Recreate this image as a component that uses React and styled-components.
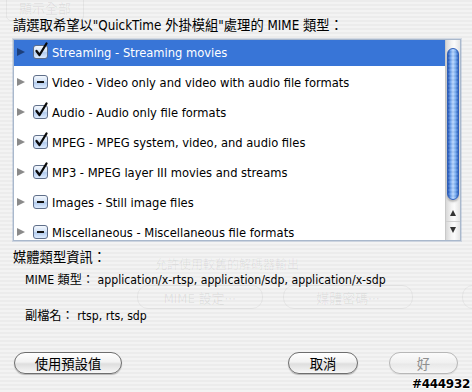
import React from "react";
import styled, { createGlobalStyle, css } from "styled-components";

const FONT = `"DejaVu Sans Condensed", "DejaVu Sans", "Noto Sans CJK TC", sans-serif`;

const Global = createGlobalStyle`
  html, body { margin: 0; padding: 0; }
  body {
    width: 472px; height: 392px; overflow: hidden;
    font-family: ${FONT};
    font-stretch: condensed;
    color: #000;
  }
`;

const Sheet = styled.div`
  position: relative;
  width: 472px;
  height: 392px;
  box-sizing: border-box;
  padding: 17px 11px 0 13px;
  background: repeating-linear-gradient(180deg, #ececec 0 2px, #f3f3f3 2px 4px);
  display: flex;
  flex-direction: column;
  overflow: hidden;
`;

const Ghost = styled.div`
  position: absolute;
  inset: 0;
  pointer-events: none;
`;

const GhostButton = styled.div`
  position: absolute;
  left: ${(p) => p.$x}px;
  top: ${(p) => p.$y}px;
  width: ${(p) => p.$w}px;
  height: ${(p) => p.$h || 22}px;
  border: 1px solid rgba(0, 0, 0, 0.05);
  border-radius: ${(p) => p.$r || 11}px;
  display: flex;
  align-items: center;
  justify-content: center;
  font-size: 13px;
  color: rgba(0, 0, 0, 0.08);
`;

const GhostText = styled.div`
  position: absolute;
  left: ${(p) => p.$x}px;
  top: ${(p) => p.$y}px;
  font-size: 12px;
  color: rgba(0, 0, 0, 0.07);
  white-space: nowrap;
`;

const Title = styled.div`
  position: relative;
  font-size: 13.3px;
  line-height: 18px;
  white-space: nowrap;
  margin-bottom: 4px;
`;

const ListBox = styled.div`
  position: relative;
  width: 446px;
  height: 200px;
  border: 1px solid #a9b8cc;
  box-shadow: 0 0 0 1px rgba(150, 170, 200, 0.35);
  background: #fff;
  display: flex;
  overflow: hidden;
`;

const Rows = styled.div`
  flex: 1;
  display: flex;
  flex-direction: column;
  gap: 4px;
`;

const Row = styled.div`
  height: 26px;
  flex: none;
  display: flex;
  align-items: center;
  font-size: 12.8px;
  line-height: 15px;
  padding-bottom: 2px;
  box-sizing: border-box;
  white-space: nowrap;
  ${(p) =>
    p.$selected &&
    css`
      background: #3875d7;
      color: #fff;
    `}
`;

const Disclosure = styled.span`
  width: 0;
  height: 0;
  margin: 0 8px 0 3px;
  border-top: 4.5px solid transparent;
  border-bottom: 4.5px solid transparent;
  border-left: 8px solid ${(p) => (p.$selected ? "#1c3f7a" : "#8a8a8a")};
`;

const Box = styled.span`
  position: relative;
  width: 13px;
  height: 12px;
  flex: none;
  border: 1px solid #5f6f8a;
  border-radius: 3px;
  background: linear-gradient(180deg, #f4f8fd 0%, #cfe0f6 50%, #b4cdef 55%, #dcebff 100%);
  margin-right: 4px;
`;

const Dash = styled.span`
  position: absolute;
  left: 3px;
  top: 5px;
  width: 7px;
  height: 2px;
  background: #111;
`;

const CheckMark = styled.svg`
  position: absolute;
  left: 1px;
  top: -3px;
  overflow: visible;
`;

const Scrollbar = styled.div`
  width: 15px;
  flex: none;
  border-left: 1px solid #c9c9c9;
  background: linear-gradient(90deg, #d8d8d8, #f4f4f4 40%, #fbfbfb 60%, #e4e4e4);
  display: flex;
  flex-direction: column;
  align-items: center;
  padding-top: 8px;
  box-sizing: border-box;
`;

const Thumb = styled.div`
  width: 12px;
  height: 152px;
  border-radius: 6px;
  box-sizing: border-box;
  border: 1px solid #2f5fb8;
  background:
    repeating-linear-gradient(180deg, rgba(255,255,255,0.08) 0 2px, rgba(0,0,0,0.04) 2px 4px),
    linear-gradient(90deg, #2457b8 0%, #6ea2ee 25%, #b9d7ff 50%, #7aaef2 75%, #2f66c4 100%);
  box-shadow: 0 2px 2px rgba(0, 0, 0, 0.25);
`;

const Arrows = styled.div`
  margin-top: auto;
  width: 100%;
  display: flex;
  flex-direction: column;
  margin-bottom: 2px;
`;

const ArrowBtn = styled.div`
  height: 16px;
  display: flex;
  align-items: center;
  justify-content: center;
  border-top: ${(p) => (p.$first ? "none" : "1px solid #d0d0d0")};
`;

const Tri = styled.span`
  width: 0;
  height: 0;
  border-left: 3.5px solid transparent;
  border-right: 3.5px solid transparent;
  ${(p) =>
    p.$up
      ? css`border-bottom: 6px solid #333;`
      : css`border-top: 6px solid #333;`}
`;

const Info = styled.div`
  position: relative;
  display: flex;
  flex-direction: column;
  margin-top: 8px;
`;

const InfoHead = styled.div`
  font-size: 13.3px;
  line-height: 18px;
`;

const InfoLine = styled.div`
  font-size: 12.2px;
  line-height: 16px;
  padding-left: 12px;
  margin-top: ${(p) => p.$mt}px;
  white-space: nowrap;
`;

const Footer = styled.div`
  position: relative;
  display: flex;
  align-items: center;
  margin-top: 28px;
  padding-left: 1px;
`;

const Button = styled.button`
  height: 22px;
  width: ${(p) => p.$w}px;
  margin-left: ${(p) => p.$ml || 0}px;
  padding: 0;
  border-radius: 11px;
  border: 1px solid ${(p) => (p.$disabled ? "#b7b7b7" : "#6e6e6e")};
  background: ${(p) =>
    p.$disabled
      ? "linear-gradient(180deg, #fbfbfb, #f0f0f0 50%, #e8e8e8 55%, #f6f6f6)"
      : "linear-gradient(180deg, #ffffff, #f2f2f2 45%, #dedede 55%, #f7f7f7)"};
  box-shadow: 0 1px 1px rgba(0, 0, 0, ${(p) => (p.$disabled ? 0.08 : 0.25)});
  font-family: ${FONT};
  font-size: 13.3px;
  color: ${(p) => (p.$disabled ? "#8e8e8e" : "#000")};
  display: flex;
  align-items: center;
  justify-content: center;
`;

const Stamp = styled.div`
  position: absolute;
  right: 2px;
  bottom: 1px;
  font-family: "DejaVu Sans", sans-serif;
  font-stretch: normal;
  font-weight: bold;
  font-size: 12px;
  letter-spacing: -0.3px;
  color: #000;
  text-shadow: 1px 0 0 #fff, -1px 0 0 #fff, 0 1px 0 #fff, 0 -1px 0 #fff;
`;

const items = [
  { label: "Streaming - Streaming movies", state: "on", selected: true },
  { label: "Video - Video only and video with audio file formats", state: "mixed" },
  { label: "Audio - Audio only file formats", state: "on" },
  { label: "MPEG - MPEG system, video, and audio files", state: "on" },
  { label: "MP3 - MPEG layer III movies and streams", state: "on" },
  { label: "Images - Still image files", state: "mixed" },
  { label: "Miscellaneous - Miscellaneous file formats", state: "mixed" },
];

function Check({ state }) {
  return (
    <Box>
      {state === "mixed" ? (
        <Dash />
      ) : (
        <CheckMark width="12" height="14" viewBox="0 0 12 14">
          <path d="M1.5 8 L4.5 12 L11.5 0.5" fill="none" stroke="#0a0a0a" strokeWidth="2.3" strokeLinecap="round" strokeLinejoin="round" />
        </CheckMark>
      )}
    </Box>
  );
}

export default function App() {
  return (
    <>
      <Global />
      <Sheet>
        <Ghost>
          <GhostButton $x={6} $y={-6} $w={76} $h={25} $r={5}>顯示全部</GhostButton>
          <GhostText $x={155} $y={255}>允許使用較舊的解碼器輸出</GhostText>
          <GhostButton $x={137} $y={285} $w={124}>MIME 設定⋯</GhostButton>
          <GhostButton $x={283} $y={285} $w={128}>媒體密碼⋯</GhostButton>
          <GhostButton $x={462} $y={285} $w={40}></GhostButton>
        </Ghost>
        <Title>請選取希望以"QuickTime 外掛模組"處理的 MIME 類型：</Title>
        <ListBox>
          <Rows>
            {items.map((it) => (
              <Row key={it.label} $selected={it.selected}>
                <Disclosure $selected={it.selected} />
                <Check state={it.state} />
                {it.label}
              </Row>
            ))}
          </Rows>
          <Scrollbar>
            <Thumb />
            <Arrows>
              <ArrowBtn $first>
                <Tri $up />
              </ArrowBtn>
              <ArrowBtn>
                <Tri />
              </ArrowBtn>
            </Arrows>
          </Scrollbar>
        </ListBox>
        <Info>
          <InfoHead>媒體類型資訊：</InfoHead>
          <InfoLine $mt={5}>MIME 類型： application/x-rtsp, application/sdp, application/x-sdp</InfoLine>
          <InfoLine $mt={20}>副檔名： rtsp, rts, sdp</InfoLine>
        </Info>
        <Footer>
          <Button $w={108}>使用預設值</Button>
          <Button $w={70} $ml={166}>取消</Button>
          <Button $w={69} $ml={31} $disabled>好</Button>
        </Footer>
        <Stamp>#444932</Stamp>
      </Sheet>
    </>
  );
}
